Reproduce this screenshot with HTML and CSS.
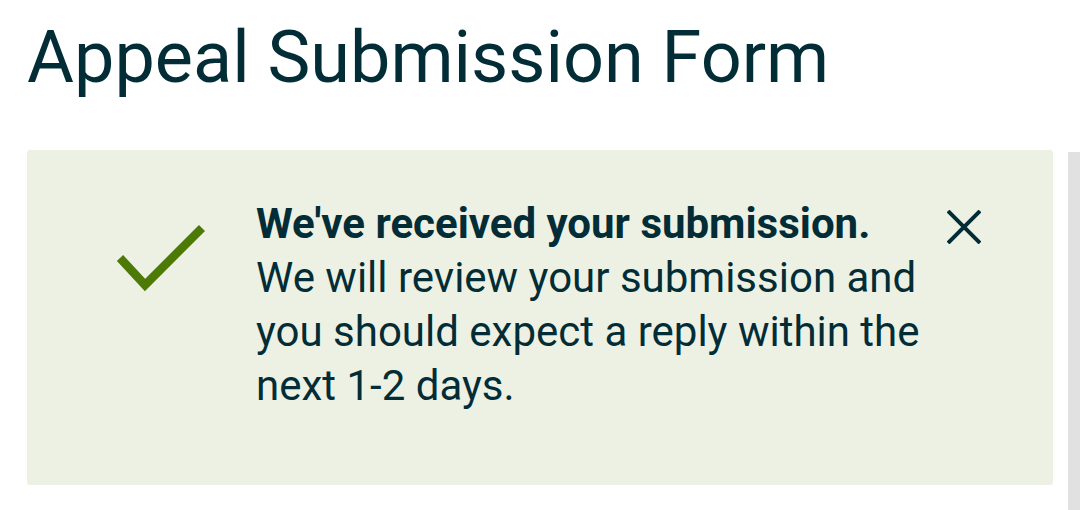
FILE: index.html
```html
<!DOCTYPE html>
<html lang="en">
<head>
<meta charset="utf-8">
<title>Appeal Submission Form</title>
<link rel="stylesheet" href="styles.css">
</head>
<body>
<div class="page">
  <h1 class="title">Appeal Submission Form</h1>
  <div class="row">
    <div class="alert">
      <div class="alert-icon">
        <svg width="92" height="72" viewBox="0 0 92 72" aria-hidden="true">
          <polyline points="6,36 31,63 88,6" fill="none" stroke="#4d7a07" stroke-width="8.5" stroke-linecap="butt" stroke-linejoin="miter"/>
        </svg>
      </div>
      <div class="alert-text">
        <p class="alert-heading">We've received your submission.</p>
        <p class="alert-body">We will review your submission and you should expect a reply within the next 1-2 days.</p>
      </div>
      <button class="alert-close" aria-label="Close">
        <svg width="34" height="34" viewBox="0 0 34 34" aria-hidden="true">
          <path d="M1 1 L33 33 M33 1 L1 33" stroke="#032d36" stroke-width="4" fill="none"/>
        </svg>
      </button>
    </div>
    <div class="side-bar"></div>
  </div>
</div>
</body>
</html>
```
FILE: styles.css
```css
html, body {
  margin: 0;
  padding: 0;
  background: #ffffff;
  height: 510px;
  overflow: hidden;
}
body {
  font-family: Roboto, "Liberation Sans", Arial, sans-serif;
  color: #032d36;
}
.page {
  padding: 16px 0 0 27px;
}
.title {
  margin: 0;
  font-size: 72px;
  font-weight: 400;
  line-height: 84px;
  letter-spacing: 0;
  color: #032d36;
}
.row {
  display: flex;
  align-items: flex-start;
  margin-top: 50px;
}
.alert {
  width: 1026px;
  box-sizing: border-box;
  display: flex;
  align-items: flex-start;
  background: #edf1e4;
  border-radius: 3px;
  padding: 47px 0 72px 0;
}
.alert-icon {
  width: 229px;
  flex: none;
}
.alert-icon svg {
  display: block;
  margin: 25px 0 0 87px;
}
.alert-text {
  width: 680px;
  flex: none;
  font-size: 42px;
  line-height: 54px;
}
.alert-text p {
  margin: 0;
}
.alert-heading {
  font-weight: 700;
}
.alert-close {
  flex: none;
  margin: 13px 0 0 11px;
  padding: 0;
  border: 0;
  background: transparent;
  width: 34px;
  height: 34px;
  cursor: pointer;
}
.alert-close svg {
  display: block;
}
.side-bar {
  flex: none;
  width: 12px;
  height: 360px;
  margin: 2px 0 0 15px;
  background: #e1e1e1;
}
```
